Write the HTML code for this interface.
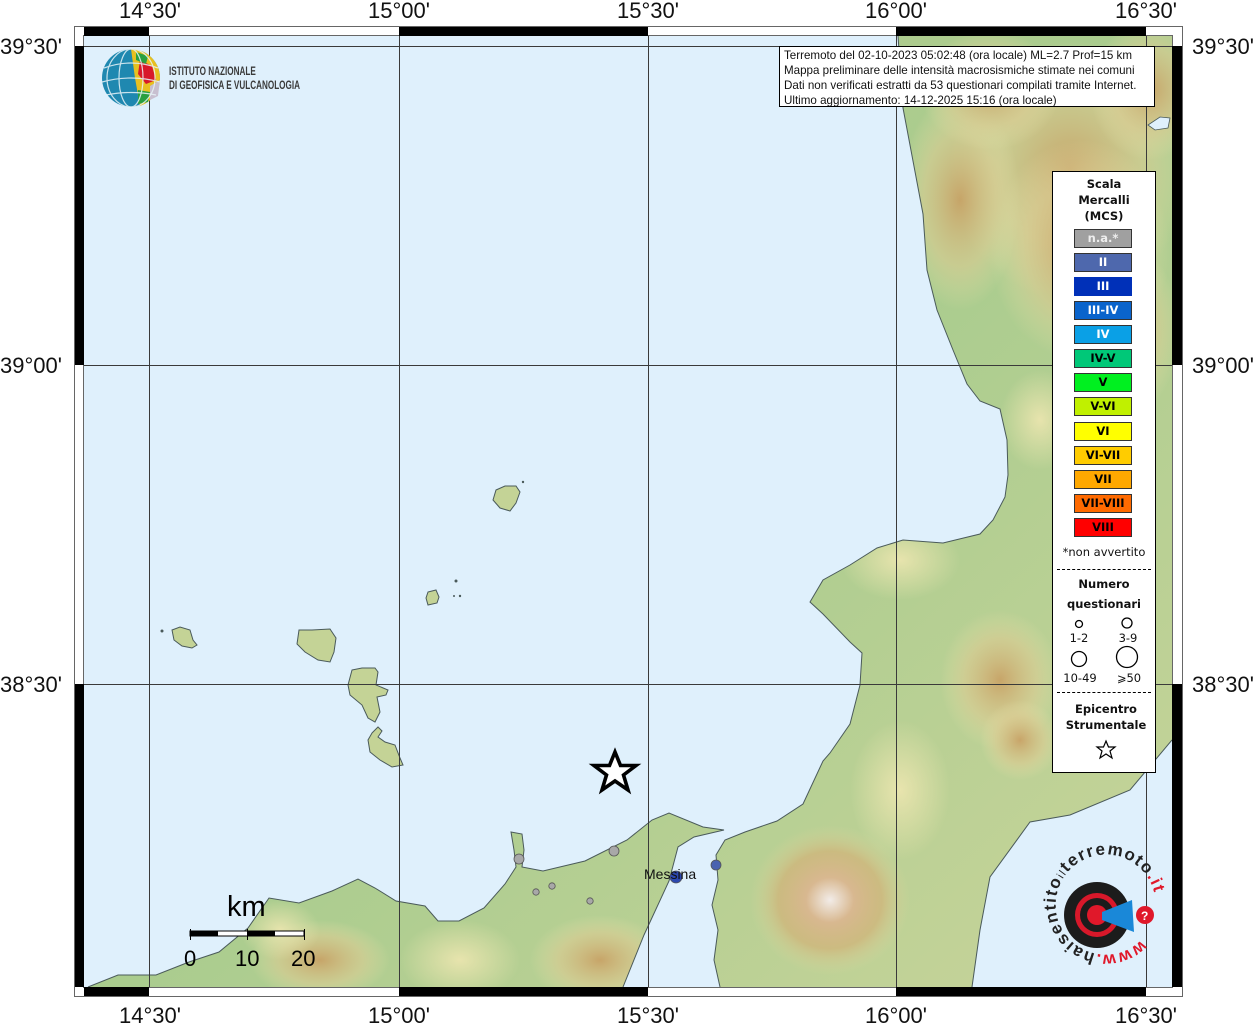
<!DOCTYPE html>
<html><head><meta charset="utf-8"><style>
html,body{margin:0;padding:0;background:#fff}
body{width:1256px;height:1024px;overflow:hidden;position:relative;font-family:"Liberation Sans",sans-serif}
</style></head><body>
<svg width="1256" height="1024" viewBox="0 0 1256 1024" xmlns="http://www.w3.org/2000/svg" style="position:absolute;left:0;top:0">
<defs>
<linearGradient id="land" x1="0" y1="0" x2="1" y2="1">
<stop offset="0" stop-color="#b9c98c"/><stop offset="0.5" stop-color="#a9cc8e"/><stop offset="1" stop-color="#c9d49a"/>
</linearGradient>
<radialGradient id="mtn" cx="0.5" cy="0.5" r="0.5">
<stop offset="0" stop-color="#c9a064" stop-opacity="0.9"/><stop offset="0.6" stop-color="#dccb92" stop-opacity="0.6"/><stop offset="1" stop-color="#e6e0a8" stop-opacity="0"/>
</radialGradient>
<radialGradient id="etna" cx="0.5" cy="0.5" r="0.5">
<stop offset="0" stop-color="#f2ece8"/><stop offset="0.3" stop-color="#d8b890"/><stop offset="0.65" stop-color="#d2b278" stop-opacity="0.7"/><stop offset="1" stop-color="#e0d8a0" stop-opacity="0"/>
</radialGradient>
<radialGradient id="hill" cx="0.5" cy="0.5" r="0.5">
<stop offset="0" stop-color="#ede6b0" stop-opacity="0.9"/><stop offset="1" stop-color="#ede6b0" stop-opacity="0"/>
</radialGradient>
<clipPath id="mapclip"><rect x="84" y="36" width="1088" height="951"/></clipPath>
<clipPath id="landclip">
<path d="M898,36 L1172,36 L1172,740 L1130,790 L1070,815 L1030,822 L990,877 L980,930 L972,987 L720,987 L714,960 L718,930 L712,905 L718,880 L716,855 L725,840 L745,832 L777,821 L803,804 L823,761 L830,753 L850,724 L860,685 L862,653 L850,642 L823,614 L810,602 L823,580 L850,565 L877,548 L903,540 L943,543 L980,534 L993,520 L1005,497 L1008,475 L1007,440 L1000,409 L980,401 L967,384 L953,350 L937,310 L927,270 L923,214 L903,108 Z"/>
<path d="M88,987 L118,975 L156,975 L189,962 L219,952 L248,928 L269,898 L299,903 L332,891 L358,879 L375,888 L396,901 L425,906 L438,921 L459,921 L484,908 L505,884 L516,867 L514,850 L511,832 L522,834 L524,850 L522,867 L543,871 L585,861 L627,840 L652,820 L669,813 L703,827 L724,830 L694,837 L678,847 L669,881 L644,935 L623,987 Z"/>
</clipPath>
</defs>
<rect x="84" y="36" width="1088" height="951" fill="#dff0fc"/>
<g clip-path="url(#mapclip)">
<g clip-path="url(#landclip)">
<rect x="84" y="36" width="1088" height="951" fill="url(#land)"/>
<ellipse cx="1070" cy="170" rx="120" ry="130" fill="url(#mtn)"/>
<ellipse cx="1080" cy="250" rx="90" ry="110" fill="url(#mtn)"/>
<ellipse cx="960" cy="200" rx="60" ry="110" fill="url(#mtn)"/>
<ellipse cx="990" cy="90" rx="70" ry="60" fill="url(#mtn)"/>
<ellipse cx="1120" cy="330" rx="60" ry="90" fill="url(#mtn)"/>
<ellipse cx="1150" cy="90" rx="60" ry="70" fill="url(#mtn)"/>
<ellipse cx="1040" cy="420" rx="40" ry="50" fill="url(#hill)"/>
<ellipse cx="1000" cy="680" rx="60" ry="70" fill="url(#mtn)"/>
<ellipse cx="1020" cy="740" rx="40" ry="40" fill="url(#mtn)"/>
<ellipse cx="900" cy="560" rx="60" ry="40" fill="url(#hill)"/>
<ellipse cx="830" cy="900" rx="80" ry="75" fill="url(#etna)"/>
<ellipse cx="900" cy="790" rx="50" ry="70" fill="url(#hill)"/>
<ellipse cx="600" cy="960" rx="70" ry="45" fill="url(#mtn)"/>
<ellipse cx="320" cy="960" rx="70" ry="40" fill="url(#mtn)"/>
<ellipse cx="460" cy="960" rx="60" ry="40" fill="url(#hill)"/>
<ellipse cx="280" cy="930" rx="40" ry="30" fill="url(#hill)"/>
</g>
<g fill="none" stroke="#4a5a5a" stroke-width="1">
<path d="M898,36 L903,108 L923,214 L927,270 L937,310 L953,350 L967,384 L980,401 L1000,409 L1007,440 L1008,475 L1005,497 L993,520 L980,534 L943,543 L903,540 L877,548 L850,565 L823,580 L810,602 L823,614 L850,642 L862,653 L860,685 L850,724 L830,753 L823,761 L803,804 L777,821 L745,832 L725,840 L716,855 L718,880 L712,905 L718,930 L714,960 L720,987"/>
<path d="M1172,740 L1130,790 L1070,815 L1030,822 L990,877 L980,930 L972,987"/>
<path d="M88,987 L118,975 L156,975 L189,962 L219,952 L248,928 L269,898 L299,903 L332,891 L358,879 L375,888 L396,901 L425,906 L438,921 L459,921 L484,908 L505,884 L516,867 L514,850 L511,832 L522,834 L524,850 L522,867 L543,871 L585,861 L627,840 L652,820 L669,813 L703,827 L724,830 L694,837 L678,847 L669,881 L644,935 L623,987"/>
</g>
<path d="M1148,125 L1160,117 L1170,118 L1168,128 L1155,130 Z" fill="#dff0fc" stroke="#4a5a5a" stroke-width="0.8"/>
<g fill="#c4d396" stroke="#4a5a5a" stroke-width="1">
<path d="M172,630 L180,627 L190,630 L193,640 L197,645 L192,648 L182,646 L174,640 Z"/>
<path d="M299,630 L312,630 L330,629 L336,638 L334,652 L330,662 L318,660 L305,652 L297,644 Z"/>
<path d="M352,670 L362,668 L375,668 L378,672 L376,685 L388,690 L386,695 L377,697 L380,712 L375,722 L368,718 L362,705 L350,695 L348,685 Z"/>
<path d="M372,733 L378,727 L382,731 L378,737 L385,742 L395,745 L400,758 L403,765 L392,767 L380,760 L370,752 L368,740 Z"/>
<path d="M428,592 L436,590 L439,597 L437,603 L428,605 L426,598 Z"/>
<path d="M496,490 L505,486 L516,486 L520,492 L516,503 L510,511 L500,508 L493,500 Z"/>
</g>
<g fill="#4a5a5a"><circle cx="523" cy="482" r="1.2"/><circle cx="456" cy="581" r="1.5"/><circle cx="454" cy="596" r="1"/><circle cx="460" cy="596" r="1.2"/><circle cx="162" cy="631" r="1.5"/></g>
<g stroke="#3a3a3a" stroke-width="1" fill="none">
<path d="M149.5,36V987M399.5,36V987M648.5,36V987M896.5,36V987M1146.5,36V987"/>
<path d="M84,46.5H1172M84,365.5H1172M84,684.5H1172"/>
</g>
<g stroke="#555" stroke-width="0.8">
<circle cx="519" cy="859" r="5" fill="#a8a8a8"/>
<circle cx="614" cy="851" r="5" fill="#a8a8a8"/>
<circle cx="536" cy="892" r="3.2" fill="#a8a8a8"/>
<circle cx="552" cy="886" r="3.2" fill="#a8a8a8"/>
<circle cx="590" cy="901" r="3.2" fill="#a8a8a8"/>
<circle cx="676" cy="877" r="6" fill="#2c48b0"/>
<circle cx="716" cy="865" r="5" fill="#4a62b0"/>
</g>
<text x="644" y="879" font-size="14" fill="#111">Messina</text>
<path d="M615,752 L620.5,765.5 L636,765.5 L623.5,775 L628,790 L615,781 L602,790 L606.5,775 L594,765.5 L609.5,765.5 Z" fill="#fff" stroke="#000" stroke-width="3.6" stroke-linejoin="miter"/>
<text x="227" y="916" font-size="29" fill="#000">km</text>
<rect x="190" y="931" width="114" height="5" fill="#fff" stroke="#000" stroke-width="1"/>
<rect x="190" y="931" width="28" height="5" fill="#000"/><rect x="247" y="931" width="28" height="5" fill="#000"/>
<path d="M190.5,929V940M247.5,929V940M304.5,929V940" stroke="#000" stroke-width="1"/>
<text x="184" y="966" font-size="22">0</text><text x="235" y="966" font-size="22">10</text><text x="291" y="966" font-size="22">20</text>
<g>
<circle cx="131" cy="78" r="29" fill="#1f88b0"/>
<path d="M131,49 A29,29 0 0 1 160,78 A29,29 0 0 1 140,106 L135,78 Z" fill="#e8c020"/>
<path d="M140,60 L152,66 L156,80 L146,84 L138,74 Z" fill="#d8182a"/>
<path d="M138,90 L150,92 L148,102 L138,104 Z" fill="#2aa040"/>
<path d="M136,52 L148,56 L146,64 L136,60 Z" fill="#2aa040"/>
<path d="M150,86 L160,80 L158,96 L150,100 Z" fill="#c8c0d0"/>
<g fill="none" stroke="#e8f4f8" stroke-width="1.2" opacity="0.85">
<ellipse cx="131" cy="78" rx="12" ry="29"/><ellipse cx="131" cy="78" rx="24" ry="29"/>
<path d="M104,68 Q131,58 158,68 M102,82 Q131,74 160,82 M106,95 Q131,90 156,95"/>
</g>
<text x="169" y="75" font-size="12" font-weight="bold" fill="#3a3a3a" transform="translate(169 0) scale(0.68 1) translate(-169 0)">ISTITUTO NAZIONALE</text>
<text x="169" y="89" font-size="12" font-weight="bold" fill="#3a3a3a" transform="translate(169 0) scale(0.68 1) translate(-169 0)">DI GEOFISICA E VULCANOLOGIA</text>
</g>
<g>
<defs><path id="circ" d="M1141,940 A50,50 0 1 1 1141.1,939.9"/></defs>
<circle cx="1097" cy="915" r="33" fill="#1c1c1c"/>
<circle cx="1097" cy="915" r="22" fill="#d8182a"/>
<circle cx="1097" cy="915" r="17" fill="#1c1c1c"/>
<circle cx="1097" cy="915" r="10" fill="#e0182a"/>
<path d="M1102,912 L1132,900 L1134,932 L1102,920 Z" fill="#1a88d8"/>
<circle cx="1145" cy="915" r="9" fill="#e0182a"/>
<text x="1141" y="920" font-size="12" font-weight="bold" fill="#fff">?</text>
<text font-size="17" font-weight="bold" fill="#222" textLength="262" lengthAdjust="spacing"><textPath href="#circ" textLength="262"><tspan fill="#e0182a">www.</tspan>hai<tspan>sentito</tspan><tspan font-size="11" font-weight="normal">il</tspan>terremoto<tspan fill="#e0182a">.it</tspan></textPath></text>
</g>
</g>
<rect x="74.5" y="26.5" width="1108" height="970" fill="none" stroke="#666" stroke-width="1"/>
<rect x="83.5" y="35.5" width="1089" height="952" fill="none" stroke="#666" stroke-width="1"/>
<g fill="#000">
<rect x="84" y="27" width="65" height="9"/><rect x="399" y="27" width="249" height="9"/><rect x="896" y="27" width="250" height="9"/>
<rect x="84" y="987" width="65" height="9"/><rect x="399" y="987" width="249" height="9"/><rect x="896" y="987" width="250" height="9"/>
<rect x="75" y="46" width="9" height="319"/><rect x="75" y="684" width="9" height="303"/>
<rect x="1172" y="46" width="10" height="319"/><rect x="1172" y="684" width="10" height="303"/>
</g>
<g font-size="22" fill="#111" text-anchor="middle">
<text x="150" y="18">14°30'</text><text x="399" y="18">15°00'</text><text x="648" y="18">15°30'</text><text x="896" y="18">16°00'</text><text x="1146" y="18">16°30'</text>
<text x="150" y="1023">14°30'</text><text x="399" y="1023">15°00'</text><text x="648" y="1023">15°30'</text><text x="896" y="1023">16°00'</text><text x="1146" y="1023">16°30'</text>
</g>
<g font-size="22" fill="#111">
<text x="0" y="54">39°30'</text><text x="0" y="373">39°00'</text><text x="0" y="692">38°30'</text>
<text x="1192" y="54">39°30'</text><text x="1192" y="373">39°00'</text><text x="1192" y="692">38°30'</text>
</g>
</svg>
<div style="position:absolute;left:779px;top:46px;width:376px;height:61px;background:#fff;border:1px solid #000;font-size:11.6px;line-height:15px;color:#111;padding:1px 0 0 4px;box-sizing:border-box;white-space:nowrap;overflow:hidden">
Terremoto del 02-10-2023 05:02:48 (ora locale) ML=2.7 Prof=15 km<br>Mappa preliminare delle intensità macrosismiche stimate nei comuni<br>Dati non verificati estratti da 53 questionari compilati tramite Internet.<br>Ultimo aggiornamento: 14-12-2025 15:16 (ora locale)
</div>
<div style="position:absolute;left:1052px;top:171px;width:104px;height:602px;background:#fff;border:1px solid #000;box-sizing:border-box;font-family:'DejaVu Sans',sans-serif;color:#111">
<div style="text-align:center;font-weight:bold;font-size:11.5px;line-height:16px;margin-top:4px">Scala<br>Mercalli<br>(MCS)</div>
<div style="position:absolute;left:21px;top:57px;width:58px">
<div style="height:19px;margin-bottom:5px;background:#a0a0a0;border:1px solid #333;box-sizing:border-box;color:#eee;font-weight:bold;font-size:11.5px;text-align:center;line-height:17px">n.a.*</div>
<div style="height:19px;margin-bottom:5px;background:#4e68ad;border:1px solid #333;box-sizing:border-box;color:#fff;font-weight:bold;font-size:11.5px;text-align:center;line-height:17px">II</div>
<div style="height:19px;margin-bottom:5px;background:#0030b8;box-sizing:border-box;color:#fff;font-weight:bold;font-size:11.5px;text-align:center;line-height:19px">III</div>
<div style="height:19px;margin-bottom:5px;background:#0a64cc;border:1px solid #333;box-sizing:border-box;color:#fff;font-weight:bold;font-size:11.5px;text-align:center;line-height:17px">III-IV</div>
<div style="height:19px;margin-bottom:5px;background:#0aa0e6;border:1px solid #333;box-sizing:border-box;color:#fff;font-weight:bold;font-size:11.5px;text-align:center;line-height:17px">IV</div>
<div style="height:19px;margin-bottom:5px;background:#00c878;border:1px solid #333;box-sizing:border-box;color:#000;font-weight:bold;font-size:11.5px;text-align:center;line-height:17px">IV-V</div>
<div style="height:19px;margin-bottom:5px;background:#00f020;border:1px solid #333;box-sizing:border-box;color:#000;font-weight:bold;font-size:11.5px;text-align:center;line-height:17px">V</div>
<div style="height:19px;margin-bottom:6px;background:#c0f000;border:1px solid #333;box-sizing:border-box;color:#000;font-weight:bold;font-size:11.5px;text-align:center;line-height:17px">V-VI</div>
<div style="height:19px;margin-bottom:5px;background:#ffff00;border:1px solid #333;box-sizing:border-box;color:#000;font-weight:bold;font-size:11.5px;text-align:center;line-height:17px">VI</div>
<div style="height:19px;margin-bottom:5px;background:#ffcc00;border:1px solid #333;box-sizing:border-box;color:#000;font-weight:bold;font-size:11.5px;text-align:center;line-height:17px">VI-VII</div>
<div style="height:19px;margin-bottom:5px;background:#ffa800;border:1px solid #333;box-sizing:border-box;color:#000;font-weight:bold;font-size:11.5px;text-align:center;line-height:17px">VII</div>
<div style="height:19px;margin-bottom:5px;background:#ff6a00;border:1px solid #333;box-sizing:border-box;color:#000;font-weight:bold;font-size:11.5px;text-align:center;line-height:17px">VII-VIII</div>
<div style="height:19px;background:#ff0000;border:1px solid #333;box-sizing:border-box;color:#000;font-weight:bold;font-size:11.5px;text-align:center;line-height:17px">VIII</div>
</div>
<div style="position:absolute;left:0;top:373px;width:102px;text-align:center;font-size:11.5px">*non avvertito</div>
<div style="position:absolute;left:4px;top:397px;width:94px;border-top:1px dashed #000"></div>
<div style="position:absolute;left:0;top:402px;width:102px;text-align:center;font-weight:bold;font-size:11.5px;line-height:20px">Numero<br>questionari</div>
<svg style="position:absolute;left:0;top:440px" width="102" height="80">
<circle cx="26" cy="12" r="3.5" fill="none" stroke="#000" stroke-width="1.3"/>
<circle cx="74" cy="11" r="5" fill="none" stroke="#000" stroke-width="1.3"/>
<circle cx="26" cy="47" r="7.5" fill="none" stroke="#000" stroke-width="1.3"/>
<circle cx="74" cy="45" r="10.5" fill="none" stroke="#000" stroke-width="1.3"/>
<g font-size="11.5" text-anchor="middle" fill="#111" font-family="DejaVu Sans,sans-serif">
<text x="26" y="30">1-2</text><text x="75" y="30">3-9</text><text x="27" y="70">10-49</text><text x="76" y="70">⩾50</text></g>
</svg>
<div style="position:absolute;left:4px;top:520px;width:94px;border-top:1px dashed #000"></div>
<div style="position:absolute;left:0;top:529px;width:106px;text-align:center;font-weight:bold;font-size:11.5px;line-height:16px">Epicentro<br>Strumentale</div>
<svg style="position:absolute;left:42px;top:567px" width="22" height="22"><path d="M11,2 L13.5,8 L20,8 L15,12 L17,19 L11,15 L5,19 L7,12 L2,8 L8.5,8 Z" fill="none" stroke="#000" stroke-width="1.2"/></svg>
</div>
</body></html>
